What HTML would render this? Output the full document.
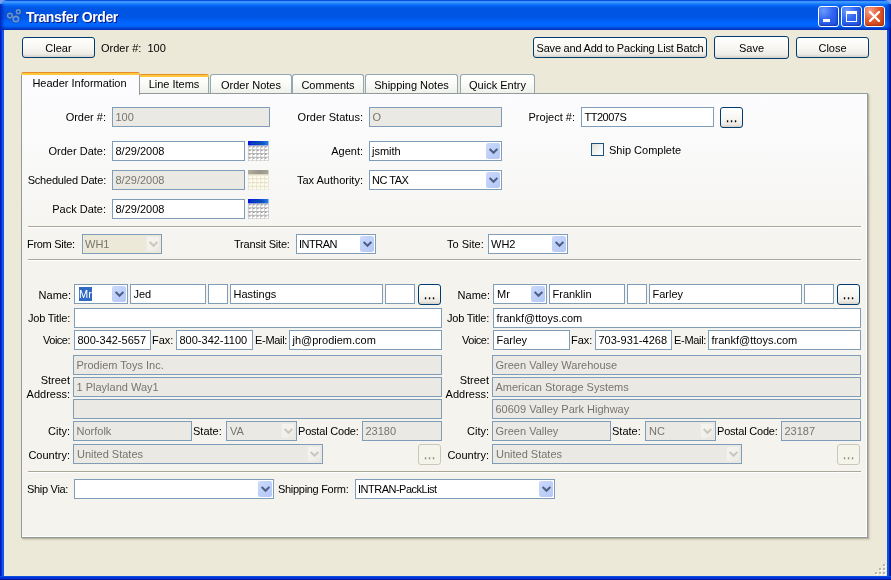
<!DOCTYPE html><html><head><meta charset="utf-8"><title>Transfer Order</title><style>
html,body{margin:0;padding:0;}
body{width:891px;height:580px;overflow:hidden;background:#ECE9D8;font-family:"Liberation Sans",sans-serif;font-size:11px;color:#000;position:relative;}
*{box-sizing:border-box;}
.a{position:absolute;}
#win{will-change:transform;position:absolute;left:0;top:0;width:891px;height:580px;background:#ECE9D8;overflow:hidden;}
#tb{position:absolute;left:0;top:0;width:891px;height:30px;border-radius:7px 7px 0 0;
 background:linear-gradient(to bottom,#0043D8 0px,#0A50E0 0.6px,#3C96FF 1.2px,#3A94FF 2.6px,#1F84FF 3.6px,#0A6CF8 5px,#035FEE 6.5px,#0057E5 8px,#0055E2 14px,#0057E8 18px,#005FF5 20.5px,#0066FF 22.5px,#0066FF 25.5px,#0060F4 26.5px,#0050DD 27.5px,#0040CC 28.5px,#0034BE 29.5px,#0030B4 30px);}
#title{position:absolute;left:26px;top:9px;font-weight:bold;font-size:14px;color:#fff;text-shadow:1px 1px 0 #0A1883;white-space:nowrap;line-height:16px;letter-spacing:-0.38px;}
.bl{position:absolute;left:0;top:30px;width:4px;height:550px;background:linear-gradient(to right,#0019C8 0,#0019C8 1px,#0A30D8 1px,#0A30D8 2px,#0F5CEA 2px,#0A55E2 4px);}
.br{position:absolute;left:887px;top:30px;width:4px;height:550px;background:linear-gradient(to left,#00138C 0,#00138C 1px,#001DB8 1px,#001DB8 2px,#0A50E0 2px,#0A55E2 4px);}
.bb{position:absolute;left:0;top:576px;width:891px;height:4px;background:linear-gradient(to top,#001590 0,#001590 1px,#0030D8 1px,#0030D8 3px,#0A4FE0 3px,#0A4FE0 4px);}
.wb{position:absolute;top:6px;width:21px;height:21px;border:1px solid #fff;border-radius:3px;
 background:radial-gradient(circle at 25% 20%,#6B9BFF 0%,#2F64F0 45%,#1F4FE0 100%);box-shadow:inset -1px -1px 2px rgba(0,20,120,.5);}
.wb.x{background:radial-gradient(circle at 25% 20%,#F2A48C 0%,#E3582F 45%,#C9400F 100%);box-shadow:inset -1px -1px 2px rgba(120,20,0,.5);}
.btn{position:absolute;height:21px;border:1px solid #003C74;border-radius:3px;background:linear-gradient(to bottom,#FFFFFF 0%,#F8F7F2 50%,#ECEBE5 85%,#D6D0C5 100%);text-align:center;line-height:19px;white-space:nowrap;}
.btn.dis{border-color:#C9C7BA;background:#F5F4EA;color:#8E8C7E;}
.tab{position:absolute;top:74px;height:19px;border:1px solid #91A7B4;border-bottom:none;border-radius:3px 3px 0 0;background:linear-gradient(to bottom,#FFFFFF 0%,#FCFCFA 40%,#F0F0EA 100%);text-align:center;line-height:20px;white-space:nowrap;}
.tab.hot{border-top:none;}
.tab.hot:before,.tab.sel:before{content:"";position:absolute;left:-1px;right:-1px;top:0;height:3px;border-radius:3px 3px 0 0;background:linear-gradient(to bottom,#E68B2C 0,#E68B2C 1px,#FFC73C 1px,#FFC73C 3px);}
.tab.sel{top:72px;height:23px;background:#FCFCFE;border-top:none;border-color:#919B9C;line-height:22px;z-index:3;padding-right:2px;}
#pane{position:absolute;left:21px;top:93px;width:847px;height:445px;border:1px solid #919B9C;background:linear-gradient(to bottom,#FCFCFE 0px,#FBFBFC 30px,#F4F3EE 165px,#F4F3EE 100%);box-shadow:1px 1px 1px rgba(160,155,130,.55), 2px 2px 2px rgba(170,165,140,.3);}
#pane:after{content:"";position:absolute;right:0;bottom:0;left:0;top:0;border-right:1px solid #fff;border-bottom:1px solid #fff;}
.lb{position:absolute;white-space:nowrap;line-height:13px;height:13px;}
.r{text-align:right;}
.f{position:absolute;height:20px;border:1px solid #7F9DB9;background:#fff;padding:0 0 0 2.5px;line-height:18px;white-space:nowrap;overflow:hidden;}
.f.d{background:#EBE9E4;color:#77756B;}
.cb{position:absolute;height:20px;border:1px solid #7F9DB9;background:#fff;padding:0 0 0 2px;line-height:18px;white-space:nowrap;overflow:hidden;}
.cb.d{background:#EBE9E4;color:#77756B;}
.cb i{position:absolute;right:1px;top:1px;width:14px;height:16px;border-radius:2px;background:linear-gradient(135deg,#CBD9FB 0%,#BFD0F9 50%,#B4C6F5 100%);}
.cb.d i{background:linear-gradient(135deg,#F6F5F1 0%,#F1F0EB 60%,#E9E7E0 100%);box-shadow:inset 0 0 0 0.5px #E4E2DA;}
.cb i svg{position:absolute;left:2.5px;top:4.5px;}
.sep{position:absolute;left:28px;width:833px;height:2px;border-top:1px solid #ACA899;border-bottom:1px solid #fff;}
.cal{position:absolute;width:20px;height:20px;}
.ck{position:absolute;width:13px;height:13px;border:1px solid #1C5180;background:linear-gradient(135deg,#DCDCD7 0%,#F3F3F0 50%,#FFFFFF 100%);}
.sel{ }
.hl{background:#316AC5;color:#fff;display:inline-block;height:14px;line-height:14px;vertical-align:top;margin:2px 0 0 2px;}
</style></head><body><div id="win">
<div class="a" style="left:0;top:0;width:891px;height:8px;background:#7C9EEC"></div><div id="tb"></div><div class="a" style="left:0;top:4px;width:5px;height:26px;background:linear-gradient(to right,rgba(0,25,170,.85) 0,rgba(0,30,190,.5) 2px,rgba(0,40,200,0) 5px)"></div><div class="a" style="left:886px;top:4px;width:5px;height:26px;background:linear-gradient(to left,rgba(0,20,140,.9) 0,rgba(0,30,180,.5) 2px,rgba(0,40,200,0) 5px)"></div><div class="bl"></div><div class="br"></div><div class="bb"></div>
<svg class="a" style="left:0;top:0" width="30" height="30" viewBox="0 0 30 30"><g fill="none"><g stroke="#1F46A8" stroke-width="1.6" stroke-dasharray="1.2 1.2"><circle cx="9.9" cy="15.6" r="3.3"/><circle cx="18.3" cy="11.7" r="2.8"/><circle cx="15.9" cy="19.1" r="3.8"/></g><g stroke="#6F94C6"><circle cx="9.9" cy="15.6" r="2.3" stroke-width="1.5"/><circle cx="18.3" cy="11.7" r="1.9" stroke-width="1.4"/><circle cx="15.9" cy="19.1" r="2.7" stroke-width="1.6"/></g></g></svg>
<div id="title">Transfer Order</div>
<div class="wb" style="left:818px"><div class="a" style="left:4px;top:12px;width:7px;height:3px;background:#fff"></div></div>
<div class="wb" style="left:841px"><div class="a" style="left:4px;top:4px;width:11px;height:11px;border:1px solid #fff;border-top-width:3px"></div></div>
<div class="wb x" style="left:864px"><svg class="a" style="left:4px;top:4px" width="11" height="11" viewBox="0 0 11 11"><path d="M1 1L10 10M10 1L1 10" stroke="#fff" stroke-width="2.4" stroke-linecap="round"/></svg></div>
<div class="btn " style="left:22px;top:37px;width:73px;height:21px;line-height:21px">Clear</div>
<div class="lb" style="left:101px;top:42px">Order #:&nbsp; 100</div>
<div class="btn " style="left:533px;top:37px;width:174px;height:21px;line-height:21px"><span style="letter-spacing:-0.22px">Save and Add to Packing List Batch</span></div>
<div class="btn " style="left:714px;top:36px;width:75px;height:23px;line-height:23px">Save</div>
<div class="btn " style="left:796px;top:37px;width:73px;height:21px;line-height:21px">Close</div>
<div id="pane"></div>
<div class="tab sel" style="left:21px;width:119px">Header Information</div>
<div class="tab hot" style="left:139px;width:70px">Line Items</div>
<div class="tab " style="left:210px;width:82px">Order Notes</div>
<div class="tab " style="left:292px;width:72px">Comments</div>
<div class="tab " style="left:365px;width:93px">Shipping Notes</div>
<div class="tab " style="left:460px;width:75px">Quick Entry</div>
<div class="lb r" style="left:-14px;width:120px;top:111px">Order #:</div>
<div class="f d" style="left:112px;top:107px;width:158px">100</div>
<div class="lb r" style="left:243px;width:120px;top:111px">Order Status:</div>
<div class="f d" style="left:369px;top:107px;width:133px">O</div>
<div class="lb r" style="left:455px;width:120px;top:111px">Project #:</div>
<div class="f" style="left:581px;top:107px;width:133px"><span style="letter-spacing:-0.5px">TT2007S</span></div>
<div class="btn " style="left:720px;top:107px;width:23px;height:21px;line-height:21px"><span style="letter-spacing:1px;margin-left:1px;-webkit-text-stroke:0.3px;display:inline-block;transform:translateY(1px) scaleY(1.4);transform-origin:50% 78%">...</span></div>
<div class="lb r" style="left:-14px;width:120px;top:145px">Order Date:</div>
<div class="f" style="left:112px;top:141px;width:133px">8/29/2008</div>
<svg class="cal" style="left:248px;top:141px;width:21px" width="21" height="20" viewBox="0 0 21 20"><defs><linearGradient id="cg1410" x1="0" x2="1" y1="0" y2="0"><stop offset="0" stop-color="#0014E6"/><stop offset="0.55" stop-color="#0B3FCF"/><stop offset="1" stop-color="#2A7CEC"/></linearGradient></defs><rect x="0" y="0" width="20.5" height="20" fill="#FFFFFF"/><rect x="0" y="0" width="20.5" height="4.6" fill="url(#cg1410)"/><rect x="2.5" y="1.6" width="14" height="1.6" fill="#0A5A9A" opacity="0.75"/><rect x="0" y="4.6" width="1" height="15.4" fill="#D2D2D2"/><rect x="4" y="4.6" width="1" height="15.4" fill="#D2D2D2"/><rect x="8" y="4.6" width="1" height="15.4" fill="#D2D2D2"/><rect x="12" y="4.6" width="1" height="15.4" fill="#D2D2D2"/><rect x="16" y="4.6" width="1" height="15.4" fill="#D2D2D2"/><rect x="20" y="4.6" width="1" height="15.4" fill="#D2D2D2"/><rect x="0" y="4.50" width="20.5" height="1" fill="#B9B9B9"/><rect x="0" y="8.25" width="20.5" height="1" fill="#B9B9B9"/><rect x="0" y="12.00" width="20.5" height="1" fill="#B9B9B9"/><rect x="0" y="15.75" width="20.5" height="1" fill="#B9B9B9"/><rect x="0" y="19.50" width="20.5" height="1" fill="#B9B9B9"/><rect x="1.2" y="5.40" width="1.2" height="1" fill="#707070"/><rect x="5.2" y="5.40" width="1.2" height="1" fill="#707070"/><rect x="9.2" y="5.40" width="1.2" height="1" fill="#707070"/><rect x="13.2" y="5.40" width="1.2" height="1" fill="#707070"/><rect x="17.2" y="5.40" width="1.2" height="1" fill="#707070"/><rect x="1.2" y="9.15" width="1.2" height="1" fill="#707070"/><rect x="5.2" y="9.15" width="1.2" height="1" fill="#707070"/><rect x="9.2" y="9.15" width="1.2" height="1" fill="#707070"/><rect x="13.2" y="9.15" width="1.2" height="1" fill="#707070"/><rect x="17.2" y="9.15" width="1.2" height="1" fill="#707070"/><rect x="1.2" y="12.90" width="1.2" height="1" fill="#707070"/><rect x="5.2" y="12.90" width="1.2" height="1" fill="#707070"/><rect x="9.2" y="12.90" width="1.2" height="1" fill="#707070"/><rect x="13.2" y="12.90" width="1.2" height="1" fill="#707070"/><rect x="17.2" y="12.90" width="1.2" height="1" fill="#707070"/><rect x="1.2" y="16.65" width="1.2" height="1" fill="#707070"/><rect x="5.2" y="16.65" width="1.2" height="1" fill="#707070"/><rect x="9.2" y="16.65" width="1.2" height="1" fill="#707070"/><rect x="13.2" y="16.65" width="1.2" height="1" fill="#707070"/><rect x="17.2" y="16.65" width="1.2" height="1" fill="#707070"/></svg>
<div class="lb r" style="left:243px;width:120px;top:145px">Agent:</div>
<div class="cb" style="left:369px;top:141px;width:133px">jsmith<i><svg width="9" height="7" viewBox="0 0 9 7"><path d="M0.6 0.9L4.5 4.8L8.4 0.9" fill="none" stroke="#4D6185" stroke-width="2.1"/></svg></i></div>
<div class="ck" style="left:591px;top:143px"></div>
<div class="lb" style="left:609px;top:144px">Ship Complete</div>
<div class="lb r" style="left:-14px;width:120px;top:174px"><span style="letter-spacing:-0.2px">Scheduled Date:</span></div>
<div class="f d" style="left:112px;top:170px;width:133px">8/29/2008</div>
<svg class="cal" style="left:248px;top:170px;width:21px" width="21" height="20" viewBox="0 0 21 20"><defs><linearGradient id="cg1701" x1="0" x2="1" y1="0" y2="0"><stop offset="0" stop-color="#B0AD9F"/><stop offset="0.55" stop-color="#9A978A"/><stop offset="1" stop-color="#A9A699"/></linearGradient></defs><rect x="0" y="0" width="20.5" height="20" fill="#FFFDEC"/><rect x="0" y="0" width="20.5" height="4.6" fill="url(#cg1701)"/><rect x="0" y="4.6" width="1" height="15.4" fill="#ECE9D6"/><rect x="4" y="4.6" width="1" height="15.4" fill="#ECE9D6"/><rect x="8" y="4.6" width="1" height="15.4" fill="#ECE9D6"/><rect x="12" y="4.6" width="1" height="15.4" fill="#ECE9D6"/><rect x="16" y="4.6" width="1" height="15.4" fill="#ECE9D6"/><rect x="20" y="4.6" width="1" height="15.4" fill="#ECE9D6"/><rect x="0" y="4.50" width="20.5" height="1" fill="#E2DFCC"/><rect x="0" y="8.25" width="20.5" height="1" fill="#E2DFCC"/><rect x="0" y="12.00" width="20.5" height="1" fill="#E2DFCC"/><rect x="0" y="15.75" width="20.5" height="1" fill="#E2DFCC"/><rect x="0" y="19.50" width="20.5" height="1" fill="#E2DFCC"/><rect x="1.2" y="5.40" width="1.2" height="1" fill="#EAE6D0"/><rect x="5.2" y="5.40" width="1.2" height="1" fill="#EAE6D0"/><rect x="9.2" y="5.40" width="1.2" height="1" fill="#EAE6D0"/><rect x="13.2" y="5.40" width="1.2" height="1" fill="#EAE6D0"/><rect x="17.2" y="5.40" width="1.2" height="1" fill="#EAE6D0"/><rect x="1.2" y="9.15" width="1.2" height="1" fill="#EAE6D0"/><rect x="5.2" y="9.15" width="1.2" height="1" fill="#EAE6D0"/><rect x="9.2" y="9.15" width="1.2" height="1" fill="#EAE6D0"/><rect x="13.2" y="9.15" width="1.2" height="1" fill="#EAE6D0"/><rect x="17.2" y="9.15" width="1.2" height="1" fill="#EAE6D0"/><rect x="1.2" y="12.90" width="1.2" height="1" fill="#EAE6D0"/><rect x="5.2" y="12.90" width="1.2" height="1" fill="#EAE6D0"/><rect x="9.2" y="12.90" width="1.2" height="1" fill="#EAE6D0"/><rect x="13.2" y="12.90" width="1.2" height="1" fill="#EAE6D0"/><rect x="17.2" y="12.90" width="1.2" height="1" fill="#EAE6D0"/><rect x="1.2" y="16.65" width="1.2" height="1" fill="#EAE6D0"/><rect x="5.2" y="16.65" width="1.2" height="1" fill="#EAE6D0"/><rect x="9.2" y="16.65" width="1.2" height="1" fill="#EAE6D0"/><rect x="13.2" y="16.65" width="1.2" height="1" fill="#EAE6D0"/><rect x="17.2" y="16.65" width="1.2" height="1" fill="#EAE6D0"/></svg>
<div class="lb r" style="left:243px;width:120px;top:174px">Tax Authority:</div>
<div class="cb" style="left:369px;top:170px;width:133px"><span style="letter-spacing:-0.5px">NC TAX</span><i><svg width="9" height="7" viewBox="0 0 9 7"><path d="M0.6 0.9L4.5 4.8L8.4 0.9" fill="none" stroke="#4D6185" stroke-width="2.1"/></svg></i></div>
<div class="lb r" style="left:-14px;width:120px;top:203px">Pack Date:</div>
<div class="f" style="left:112px;top:199px;width:133px">8/29/2008</div>
<svg class="cal" style="left:248px;top:199px;width:21px" width="21" height="20" viewBox="0 0 21 20"><defs><linearGradient id="cg1990" x1="0" x2="1" y1="0" y2="0"><stop offset="0" stop-color="#0014E6"/><stop offset="0.55" stop-color="#0B3FCF"/><stop offset="1" stop-color="#2A7CEC"/></linearGradient></defs><rect x="0" y="0" width="20.5" height="20" fill="#FFFFFF"/><rect x="0" y="0" width="20.5" height="4.6" fill="url(#cg1990)"/><rect x="2.5" y="1.6" width="14" height="1.6" fill="#0A5A9A" opacity="0.75"/><rect x="0" y="4.6" width="1" height="15.4" fill="#D2D2D2"/><rect x="4" y="4.6" width="1" height="15.4" fill="#D2D2D2"/><rect x="8" y="4.6" width="1" height="15.4" fill="#D2D2D2"/><rect x="12" y="4.6" width="1" height="15.4" fill="#D2D2D2"/><rect x="16" y="4.6" width="1" height="15.4" fill="#D2D2D2"/><rect x="20" y="4.6" width="1" height="15.4" fill="#D2D2D2"/><rect x="0" y="4.50" width="20.5" height="1" fill="#B9B9B9"/><rect x="0" y="8.25" width="20.5" height="1" fill="#B9B9B9"/><rect x="0" y="12.00" width="20.5" height="1" fill="#B9B9B9"/><rect x="0" y="15.75" width="20.5" height="1" fill="#B9B9B9"/><rect x="0" y="19.50" width="20.5" height="1" fill="#B9B9B9"/><rect x="1.2" y="5.40" width="1.2" height="1" fill="#707070"/><rect x="5.2" y="5.40" width="1.2" height="1" fill="#707070"/><rect x="9.2" y="5.40" width="1.2" height="1" fill="#707070"/><rect x="13.2" y="5.40" width="1.2" height="1" fill="#707070"/><rect x="17.2" y="5.40" width="1.2" height="1" fill="#707070"/><rect x="1.2" y="9.15" width="1.2" height="1" fill="#707070"/><rect x="5.2" y="9.15" width="1.2" height="1" fill="#707070"/><rect x="9.2" y="9.15" width="1.2" height="1" fill="#707070"/><rect x="13.2" y="9.15" width="1.2" height="1" fill="#707070"/><rect x="17.2" y="9.15" width="1.2" height="1" fill="#707070"/><rect x="1.2" y="12.90" width="1.2" height="1" fill="#707070"/><rect x="5.2" y="12.90" width="1.2" height="1" fill="#707070"/><rect x="9.2" y="12.90" width="1.2" height="1" fill="#707070"/><rect x="13.2" y="12.90" width="1.2" height="1" fill="#707070"/><rect x="17.2" y="12.90" width="1.2" height="1" fill="#707070"/><rect x="1.2" y="16.65" width="1.2" height="1" fill="#707070"/><rect x="5.2" y="16.65" width="1.2" height="1" fill="#707070"/><rect x="9.2" y="16.65" width="1.2" height="1" fill="#707070"/><rect x="13.2" y="16.65" width="1.2" height="1" fill="#707070"/><rect x="17.2" y="16.65" width="1.2" height="1" fill="#707070"/></svg>
<div class="sep" style="top:226px"></div>
<div class="lb" style="left:27px;top:238px"><span style="letter-spacing:-0.3px">From Site:</span></div>
<div class="cb d" style="left:82px;top:234px;width:80px;background:#ECE9D8">WH1<i><svg width="9" height="7" viewBox="0 0 9 7"><path d="M0.6 0.9L4.5 4.8L8.4 0.9" fill="none" stroke="#CBC9BD" stroke-width="2.1"/></svg></i></div>
<div class="lb" style="left:234px;top:238px"><span style="letter-spacing:-0.2px">Transit Site:</span></div>
<div class="cb" style="left:296px;top:234px;width:80px"><span style="letter-spacing:-0.5px">INTRAN</span><i><svg width="9" height="7" viewBox="0 0 9 7"><path d="M0.6 0.9L4.5 4.8L8.4 0.9" fill="none" stroke="#4D6185" stroke-width="2.1"/></svg></i></div>
<div class="lb" style="left:447px;top:238px">To Site:</div>
<div class="cb" style="left:488px;top:234px;width:80px">WH2<i><svg width="9" height="7" viewBox="0 0 9 7"><path d="M0.6 0.9L4.5 4.8L8.4 0.9" fill="none" stroke="#4D6185" stroke-width="2.1"/></svg></i></div>
<div class="sep" style="top:259px"></div>
<div class="lb r" style="left:-49px;width:120px;top:289px">Name:</div>
<div class="cb" style="left:74px;top:284px;width:54px"><span class="hl">Mr</span><i><svg width="9" height="7" viewBox="0 0 9 7"><path d="M0.6 0.9L4.5 4.8L8.4 0.9" fill="none" stroke="#4D6185" stroke-width="2.1"/></svg></i></div>
<div class="f" style="left:130px;top:284px;width:76px">Jed</div>
<div class="f" style="left:208px;top:284px;width:20px"></div>
<div class="f" style="left:230px;top:284px;width:153px">Hastings</div>
<div class="f" style="left:385px;top:284px;width:30px"></div>
<div class="btn " style="left:418px;top:284px;width:23px;height:21px;line-height:21px"><span style="letter-spacing:1px;margin-left:1px;-webkit-text-stroke:0.3px;display:inline-block;transform:translateY(1px) scaleY(1.4);transform-origin:50% 78%">...</span></div>
<div class="lb r" style="left:-50px;width:120px;top:312px"><span style="letter-spacing:-0.2px">Job Title:</span></div>
<div class="f" style="left:74px;top:308px;width:368px"></div>
<div class="lb r" style="left:-50px;width:120px;top:334px"><span style="letter-spacing:-0.5px">Voice:</span></div>
<div class="f" style="left:74px;top:330px;width:77px">800-342-5657</div>
<div class="lb" style="left:152px;top:334px">Fax:</div>
<div class="f" style="left:176px;top:330px;width:77px">800-342-1100</div>
<div class="lb" style="left:255px;top:334px"><span style="letter-spacing:-0.3px">E-Mail:</span></div>
<div class="f" style="left:289px;top:330px;width:153px">jh@prodiem.com</div>
<div class="f d" style="left:73px;top:355px;width:369px">Prodiem Toys Inc.</div>
<div class="f d" style="left:73px;top:377px;width:369px">1 Playland Way1</div>
<div class="f d" style="left:73px;top:399px;width:369px"></div>
<div class="lb r" style="left:10px;width:60px;top:373px;height:28px;line-height:14px">Street<br>Address:</div>
<div class="lb r" style="left:-50px;width:120px;top:425px">City:</div>
<div class="f d" style="left:73px;top:421px;width:119px">Norfolk</div>
<div class="lb" style="left:193px;top:425px">State:</div>
<div class="cb d" style="left:226px;top:421px;width:71px;padding-left:3px">VA<i><svg width="9" height="7" viewBox="0 0 9 7"><path d="M0.6 0.9L4.5 4.8L8.4 0.9" fill="none" stroke="#CBC9BD" stroke-width="2.1"/></svg></i></div>
<div class="lb" style="left:298px;top:425px"><span style="letter-spacing:-0.2px">Postal Code:</span></div>
<div class="f d" style="left:362px;top:421px;width:80px">23180</div>
<div class="lb r" style="left:-50px;width:120px;top:449px">Country:</div>
<div class="cb d" style="left:73px;top:444px;width:250px;padding-left:3px">United States<i><svg width="9" height="7" viewBox="0 0 9 7"><path d="M0.6 0.9L4.5 4.8L8.4 0.9" fill="none" stroke="#CBC9BD" stroke-width="2.1"/></svg></i></div>
<div class="btn dis" style="left:418px;top:444px;width:23px;height:21px;line-height:21px"><span style="letter-spacing:1px;margin-left:1px;-webkit-text-stroke:0.3px;display:inline-block;transform:translateY(1px) scaleY(1.4);transform-origin:50% 78%">...</span></div>
<div class="lb r" style="left:370px;width:120px;top:289px">Name:</div>
<div class="cb" style="left:493px;top:284px;width:54px;padding-left:3px">Mr<i><svg width="9" height="7" viewBox="0 0 9 7"><path d="M0.6 0.9L4.5 4.8L8.4 0.9" fill="none" stroke="#4D6185" stroke-width="2.1"/></svg></i></div>
<div class="f" style="left:549px;top:284px;width:76px">Franklin</div>
<div class="f" style="left:627px;top:284px;width:20px"></div>
<div class="f" style="left:649px;top:284px;width:153px">Farley</div>
<div class="f" style="left:804px;top:284px;width:30px"></div>
<div class="btn " style="left:837px;top:284px;width:23px;height:21px;line-height:21px"><span style="letter-spacing:1px;margin-left:1px;-webkit-text-stroke:0.3px;display:inline-block;transform:translateY(1px) scaleY(1.4);transform-origin:50% 78%">...</span></div>
<div class="lb r" style="left:369px;width:120px;top:312px"><span style="letter-spacing:-0.2px">Job Title:</span></div>
<div class="f" style="left:493px;top:308px;width:368px">frankf@ttoys.com</div>
<div class="lb r" style="left:369px;width:120px;top:334px"><span style="letter-spacing:-0.5px">Voice:</span></div>
<div class="f" style="left:493px;top:330px;width:77px">Farley</div>
<div class="lb" style="left:571px;top:334px">Fax:</div>
<div class="f" style="left:595px;top:330px;width:77px">703-931-4268</div>
<div class="lb" style="left:674px;top:334px"><span style="letter-spacing:-0.3px">E-Mail:</span></div>
<div class="f" style="left:708px;top:330px;width:153px">frankf@ttoys.com</div>
<div class="f d" style="left:492px;top:355px;width:369px">Green Valley Warehouse</div>
<div class="f d" style="left:492px;top:377px;width:369px">American Storage Systems</div>
<div class="f d" style="left:492px;top:399px;width:369px">60609 Valley Park Highway</div>
<div class="lb r" style="left:429px;width:60px;top:373px;height:28px;line-height:14px">Street<br>Address:</div>
<div class="lb r" style="left:369px;width:120px;top:425px">City:</div>
<div class="f d" style="left:492px;top:421px;width:119px">Green Valley</div>
<div class="lb" style="left:612px;top:425px">State:</div>
<div class="cb d" style="left:645px;top:421px;width:71px;padding-left:3px">NC<i><svg width="9" height="7" viewBox="0 0 9 7"><path d="M0.6 0.9L4.5 4.8L8.4 0.9" fill="none" stroke="#CBC9BD" stroke-width="2.1"/></svg></i></div>
<div class="lb" style="left:717px;top:425px"><span style="letter-spacing:-0.2px">Postal Code:</span></div>
<div class="f d" style="left:781px;top:421px;width:80px">23187</div>
<div class="lb r" style="left:369px;width:120px;top:449px">Country:</div>
<div class="cb d" style="left:492px;top:444px;width:250px;padding-left:3px">United States<i><svg width="9" height="7" viewBox="0 0 9 7"><path d="M0.6 0.9L4.5 4.8L8.4 0.9" fill="none" stroke="#CBC9BD" stroke-width="2.1"/></svg></i></div>
<div class="btn dis" style="left:837px;top:444px;width:23px;height:21px;line-height:21px"><span style="letter-spacing:1px;margin-left:1px;-webkit-text-stroke:0.3px;display:inline-block;transform:translateY(1px) scaleY(1.4);transform-origin:50% 78%">...</span></div>
<div class="sep" style="top:471px"></div>
<div class="lb" style="left:27px;top:483px"><span style="letter-spacing:-0.3px">Ship Via:</span></div>
<div class="cb" style="left:74px;top:479px;width:200px"><i><svg width="9" height="7" viewBox="0 0 9 7"><path d="M0.6 0.9L4.5 4.8L8.4 0.9" fill="none" stroke="#4D6185" stroke-width="2.1"/></svg></i></div>
<div class="lb" style="left:278px;top:483px"><span style="letter-spacing:-0.3px">Shipping Form:</span></div>
<div class="cb" style="left:355px;top:479px;width:200px"><span style="letter-spacing:-0.5px">INTRAN-PackList</span><i><svg width="9" height="7" viewBox="0 0 9 7"><path d="M0.6 0.9L4.5 4.8L8.4 0.9" fill="none" stroke="#4D6185" stroke-width="2.1"/></svg></i></div>
<div class="a" style="left:884px;top:565px;width:2px;height:2px;background:#fff"></div><div class="a" style="left:883px;top:564px;width:2px;height:2px;background:#B8B4A2"></div>
<div class="a" style="left:880px;top:569px;width:2px;height:2px;background:#fff"></div><div class="a" style="left:879px;top:568px;width:2px;height:2px;background:#B8B4A2"></div>
<div class="a" style="left:884px;top:569px;width:2px;height:2px;background:#fff"></div><div class="a" style="left:883px;top:568px;width:2px;height:2px;background:#B8B4A2"></div>
<div class="a" style="left:876px;top:573px;width:2px;height:2px;background:#fff"></div><div class="a" style="left:875px;top:572px;width:2px;height:2px;background:#B8B4A2"></div>
<div class="a" style="left:880px;top:573px;width:2px;height:2px;background:#fff"></div><div class="a" style="left:879px;top:572px;width:2px;height:2px;background:#B8B4A2"></div>
<div class="a" style="left:884px;top:573px;width:2px;height:2px;background:#fff"></div><div class="a" style="left:883px;top:572px;width:2px;height:2px;background:#B8B4A2"></div>
</div></body></html>
